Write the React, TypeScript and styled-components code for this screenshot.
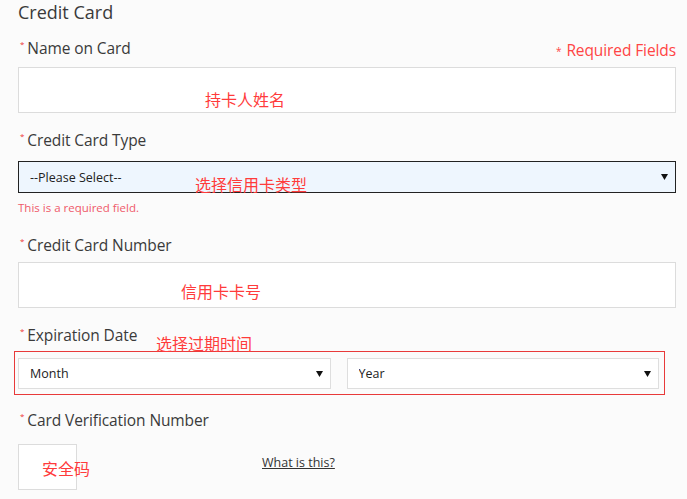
import React from "react";
import styled, { createGlobalStyle } from "styled-components";

const Global = createGlobalStyle`
  html, body { margin: 0; padding: 0; background: #fbfbfb; }
  body { font-family: "Open Sans", "Noto Sans CJK SC", sans-serif; color: #333; }
  * { box-sizing: border-box; }
`;

const Page = styled.div`
  width: 687px;
  height: 499px;
  padding: 0 11px 0 18px;
  overflow: hidden;
  background: #fbfbfb;
  display: flex;
  flex-direction: column;
`;

const Title = styled.h2`
  margin: 0;
  height: 24px;
  line-height: 24px;
  font-size: 18px;
  font-weight: 400;
  color: #3a3a3a;
`;

const Field = styled.div<{ $top: number }>`
  margin-top: ${(p) => p.$top}px;
  position: relative;
  display: flex;
  flex-direction: column;
`;

const HeaderRow = styled.div`
  display: flex;
  justify-content: space-between;
  align-items: flex-start;
  height: 20px;
`;

const Label = styled.label`
  display: block;
  font-size: 15.5px;
  line-height: 20px;
  color: #3a3a3a;
  letter-spacing: -0.1px;
`;

const Star = styled.span`
  color: #e33;
  font-size: 8px;
  line-height: 8px;
  vertical-align: top;
  position: relative;
  top: 2px;
  margin: 0 3px 0 2px;
`;

const Required = styled.span`
  margin-top: 2px;
  font-size: 15.5px;
  line-height: 20px;
  color: #f44;
  letter-spacing: -0.1px;
`;

const RequiredStar = styled.span`
  font-size: 10px;
  vertical-align: top;
  position: relative;
  top: 1px;
  margin-right: 5px;
`;

const Control = styled.div<{ $top: number; $width?: number }>`
  position: relative;
  margin-top: ${(p) => p.$top}px;
  width: ${(p) => (p.$width ? `${p.$width}px` : "100%")};
  flex: none;
`;

const TextBox = styled.input`
  display: block;
  width: 100%;
  height: 46px;
  border: 1px solid #dcdcdc;
  background: #fff;
  outline: none;
  padding: 0 10px;
  font-family: inherit;
  font-size: 14px;
`;

const SelectWrap = styled.div<{ $focused?: boolean }>`
  position: relative;
  flex: 1;
  height: ${(p) => (p.$focused ? 32 : 31)}px;
`;

const Select = styled.select<{ $focused?: boolean }>`
  appearance: none;
  -webkit-appearance: none;
  display: block;
  width: 100%;
  height: 100%;
  margin: 0;
  border: 1px solid ${(p) => (p.$focused ? "#222" : "#dedede")};
  background: ${(p) => (p.$focused ? "#eef6fe" : "#fff")};
  color: #222;
  font-family: "Open Sans", sans-serif;
  font-size: 12.5px;
  padding: 0 0 0 11px;
  outline: none;
  border-radius: 0;
`;

const Arrow = styled.svg`
  position: absolute;
  right: 8px;
  top: 50%;
  margin-top: -3px;
  width: 7px;
  height: 6px;
  pointer-events: none;
`;

const ErrorText = styled.div`
  margin-top: 7px;
  font-size: 11.5px;
  line-height: 16px;
  color: #ef5a6a;
`;

const ExpiryBox = styled.div`
  margin-top: 6px;
  margin-left: -4px;
  width: 651px;
  height: 44px;
  border: 1px solid #e83a3a;
  padding: 6px 5px 4px 3px;
  display: flex;
  gap: 16px;
`;

const CvvRow = styled.div`
  display: flex;
  align-items: flex-start;
  margin-top: 14px;
`;

const HelpLink = styled.a`
  margin-left: 185px;
  margin-top: 11px;
  font-size: 12.5px;
  line-height: 16px;
  color: #333;
  text-decoration: underline;
  text-decoration-thickness: 1px;
`;

const Note = styled.span<{ $top: number; $left: number }>`
  position: absolute;
  top: ${(p) => p.$top}px;
  left: ${(p) => p.$left}px;
  font-family: "Noto Sans CJK SC", sans-serif;
  font-size: 16px;
  line-height: 18px;
  color: #ff3b3b;
  white-space: nowrap;
  pointer-events: none;
`;

const Caret = () => (
  <Arrow viewBox="0 0 7 6">
    <path d="M0 0 H7 L3.5 6 Z" fill="#111" />
  </Arrow>
);

const Req = () => <Star>*</Star>;

export default function App() {
  return (
    <>
      <Global />
      <Page>
        <Title>Credit Card</Title>

        <Field $top={14}>
          <HeaderRow>
            <Label>
              <Req />Name on Card
            </Label>
            <Required>
              <RequiredStar>*</RequiredStar>Required Fields
            </Required>
          </HeaderRow>
          <Control $top={9}>
            <TextBox type="text" />
            <Note $top={23} $left={187}>持卡人姓名</Note>
          </Control>
        </Field>

        <Field $top={17}>
          <Label>
            <Req />Credit Card Type
          </Label>
          <Control $top={11}>
            <SelectWrap $focused>
              <Select $focused defaultValue="">
                <option value="">--Please Select--</option>
              </Select>
              <Caret />
            </SelectWrap>
            <Note $top={14} $left={177}>选择信用卡类型</Note>
          </Control>
          <ErrorText>This is a required field.</ErrorText>
        </Field>

        <Field $top={19}>
          <Label>
            <Req />Credit Card Number
          </Label>
          <Control $top={7}>
            <TextBox type="text" />
            <Note $top={20} $left={163}>信用卡卡号</Note>
          </Control>
        </Field>

        <Field $top={17}>
          <Label>
            <Req />Expiration Date
          </Label>
          <Note $top={9} $left={138}>选择过期时间</Note>
          <ExpiryBox>
            <SelectWrap>
              <Select defaultValue="">
                <option value="">Month</option>
              </Select>
              <Caret />
            </SelectWrap>
            <SelectWrap>
              <Select defaultValue="">
                <option value="">Year</option>
              </Select>
              <Caret />
            </SelectWrap>
          </ExpiryBox>
        </Field>

        <Field $top={15}>
          <Label>
            <Req />Card Verification Number
          </Label>
          <CvvRow>
            <Control $top={0} $width={59}>
              <TextBox type="text" />
              <Note $top={15} $left={24}>安全码</Note>
            </Control>
            <HelpLink href="#">What is this?</HelpLink>
          </CvvRow>
        </Field>
      </Page>
    </>
  );
}
